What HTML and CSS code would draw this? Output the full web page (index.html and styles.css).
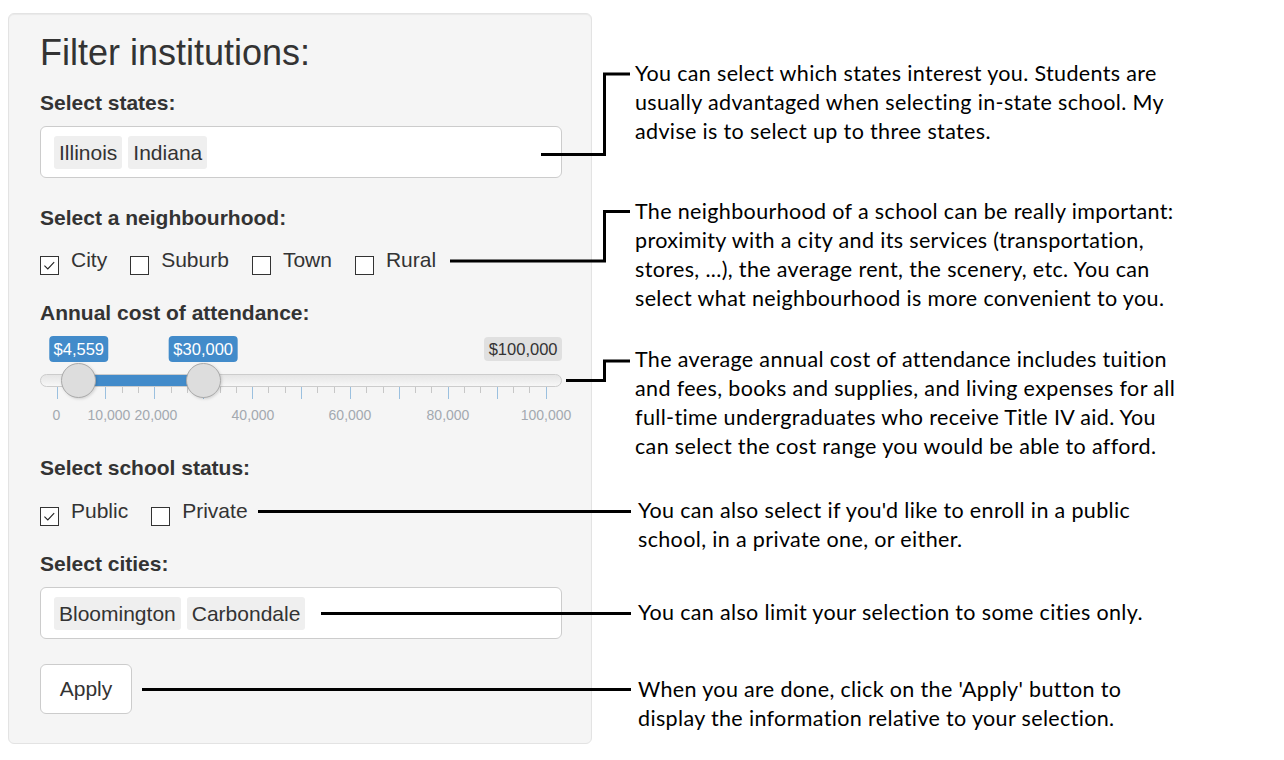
FILE: index.html
```html
<!DOCTYPE html>
<html lang="en">
<head>
<meta charset="utf-8">
<title>Filter institutions</title>
<link rel="stylesheet" href="styles.css">
</head>
<body>
<div class="page">
  <form class="well">
    <h3 class="title">Filter institutions:</h3>

    <div class="group g-states">
      <label class="ctl-label">Select states:</label>
      <div class="select-box"><span class="tag">Illinois</span><span class="tag">Indiana</span></div>
    </div>

    <div class="group g-hood">
      <label class="ctl-label">Select a neighbourhood:</label>
      <div class="checks">
        <label class="check"><span class="box"><svg viewBox="0 0 20 20" width="18" height="18"><polyline points="4,9.5 8,13.5 15.5,5.5" fill="none" stroke="#222" stroke-width="1.3"/></svg></span>City</label>
        <label class="check"><span class="box"></span>Suburb</label>
        <label class="check"><span class="box"></span>Town</label>
        <label class="check"><span class="box"></span>Rural</label>
      </div>
    </div>

    <div class="group g-cost">
      <label class="ctl-label">Annual cost of attendance:</label>
      <div class="slider">
        <span class="irs-max">$100,000</span>
        <span class="irs-single" style="left:38.8px">$4,559</span>
        <span class="irs-single" style="left:163.2px">$30,000</span>
        <span class="irs-line"></span>
        <span class="irs-bar" style="left:38.8px;width:124.4px"></span>
        <div class="grid">
          <span class="pol" style="left:16.5px"></span>
          <span class="pol small" style="left:32.8px"></span>
          <span class="pol small" style="left:49.1px"></span>
          <span class="pol" style="left:65.4px"></span>
          <span class="pol small" style="left:81.7px"></span>
          <span class="pol small" style="left:98px"></span>
          <span class="pol" style="left:114.3px"></span>
          <span class="pol small" style="left:130.6px"></span>
          <span class="pol small" style="left:146.9px"></span>
          <span class="pol" style="left:163.2px"></span>
          <span class="pol small" style="left:179.5px"></span>
          <span class="pol small" style="left:195.8px"></span>
          <span class="pol" style="left:212.1px"></span>
          <span class="pol small" style="left:228.4px"></span>
          <span class="pol small" style="left:244.7px"></span>
          <span class="pol" style="left:261px"></span>
          <span class="pol small" style="left:277.3px"></span>
          <span class="pol small" style="left:293.6px"></span>
          <span class="pol" style="left:309.9px"></span>
          <span class="pol small" style="left:326.2px"></span>
          <span class="pol small" style="left:342.5px"></span>
          <span class="pol" style="left:358.8px"></span>
          <span class="pol small" style="left:375.1px"></span>
          <span class="pol small" style="left:391.4px"></span>
          <span class="pol" style="left:407.7px"></span>
          <span class="pol small" style="left:424px"></span>
          <span class="pol small" style="left:440.3px"></span>
          <span class="pol" style="left:456.6px"></span>
          <span class="pol small" style="left:472.9px"></span>
          <span class="pol small" style="left:489.2px"></span>
          <span class="pol" style="left:505.5px"></span>
          <span class="gtext" style="left:16.5px">0</span>
          <span class="gtext" style="left:69px">10,000</span>
          <span class="gtext" style="left:116px">20,000</span>
          <span class="gtext" style="left:213px">40,000</span>
          <span class="gtext" style="left:310px">60,000</span>
          <span class="gtext" style="left:408px">80,000</span>
          <span class="gtext" style="left:506px">100,000</span>
        </div>
        <span class="irs-handle" style="left:38.8px"></span>
        <span class="irs-handle" style="left:163.2px"></span>
      </div>
    </div>

    <div class="group g-status">
      <label class="ctl-label">Select school status:</label>
      <div class="checks">
        <label class="check"><span class="box"><svg viewBox="0 0 20 20" width="18" height="18"><polyline points="4,9.5 8,13.5 15.5,5.5" fill="none" stroke="#222" stroke-width="1.3"/></svg></span>Public</label>
        <label class="check"><span class="box"></span>Private</label>
      </div>
    </div>

    <div class="group g-cities">
      <label class="ctl-label">Select cities:</label>
      <div class="select-box"><span class="tag">Bloomington</span><span class="tag">Carbondale</span></div>
    </div>

    <button type="button" class="btn">Apply</button>
  </form>

  <div class="notes">
    <p class="note n1">You can select which states interest you. Students are<br>usually advantaged when selecting in-state school. My<br>advise is to select up to three states.</p>
    <p class="note n2">The neighbourhood of a school can be really important:<br>proximity with a city and its services (transportation,<br>stores, ...), the average rent, the scenery, etc. You can<br>select what neighbourhood is more convenient to you.</p>
    <p class="note n3">The average annual cost of attendance includes tuition<br>and fees, books and supplies, and living expenses for all<br>full-time undergraduates who receive Title IV aid. You<br>can select the cost range you would be able to afford.</p>
    <p class="note n4">You can also select if you'd like to enroll in a public<br>school, in a private one, or either.</p>
    <p class="note n5">You can also limit your selection to some cities only.</p>
    <p class="note n6">When you are done, click on the 'Apply' button to<br>display the information relative to your selection.</p>
  </div>

  <svg class="connectors" width="1284" height="760" viewBox="0 0 1284 760">
    <g fill="none" stroke="#000" stroke-width="3">
      <polyline points="541,154.5 604.5,154.5 604.5,74 630,74"/>
      <polyline points="450,261 604.5,261 604.5,211.5 630,211.5"/>
      <polyline points="566,380.5 604.5,380.5 604.5,361 630,361"/>
      <line x1="258" y1="511.5" x2="631" y2="511.5"/>
      <line x1="321" y1="613.5" x2="631" y2="613.5"/>
      <line x1="142" y1="689.5" x2="631" y2="689.5"/>
    </g>
  </svg>
</div>
</body>
</html>
```

FILE: styles.css
```css
* { box-sizing: border-box; }

html, body {
  margin: 0;
  padding: 0;
  background: #ffffff;
}

body {
  font-family: "Liberation Sans", Arial, Helvetica, sans-serif;
  color: #333333;
  font-size: 21px;
}

.page {
  position: relative;
  width: 1284px;
  height: 760px;
  display: flex;
  align-items: flex-start;
  padding: 13px 0 0 8px;
}

/* ---------- panel ---------- */
.well {
  width: 584px;
  height: 731px;
  flex: none;
  margin: 0;
  padding: 19px 29px 0 31px;
  background: #f5f5f5;
  border: 1px solid #e3e3e3;
  border-radius: 6px;
  box-shadow: inset 0 1px 1px rgba(0,0,0,0.05);
  display: flex;
  flex-direction: column;
  align-items: flex-start;
}

.title {
  margin: 0 0 15px;
  font-size: 36px;
  font-weight: 400;
  line-height: 40px;
  color: #333;
}

.group {
  width: 100%;
  display: flex;
  flex-direction: column;
}

.ctl-label {
  display: block;
  font-weight: 700;
  font-size: 21px;
  line-height: 30px;
  height: 30px;
}

.g-states { margin-bottom: 25px; }
.g-states .ctl-label,
.g-cities .ctl-label { margin-bottom: 8px; }
.g-hood { margin-bottom: 23px; }
.g-cost { margin-bottom: 23px; }
.g-status { margin-bottom: 23px; }
.g-cities { margin-bottom: 25px; }

.select-box {
  width: 100%;
  height: 52px;
  background: #ffffff;
  border: 1px solid #cccccc;
  border-radius: 6px;
  padding: 0 13px;
  display: flex;
  align-items: center;
  gap: 6px;
}

.tag {
  background: #efefef;
  border-radius: 3px;
  height: 33px;
  line-height: 33px;
  padding: 0 5px;
  font-size: 21px;
  color: #333;
}

/* ---------- checkboxes ---------- */
.checks {
  display: flex;
  align-items: flex-start;
  height: 30px;
}
.g-hood .checks { margin-top: 12px; }
.g-status .checks { margin-top: 13px; }

.check {
  display: flex;
  align-items: flex-start;
  line-height: 30px;
  font-size: 21px;
  font-weight: 400;
  margin-right: 23px;
}

.box {
  width: 19px;
  height: 19px;
  flex: none;
  margin-top: 11px;
  margin-right: 12px;
  border: 1px solid #333;
  background: #fff;
  display: flex;
  align-items: center;
  justify-content: center;
}
.box svg { display: block; }

/* ---------- slider ---------- */
.g-cost .ctl-label { margin-bottom: 7px; }

.slider {
  position: relative;
  width: 100%;
  height: 95px;
}

.irs-max,
.irs-single {
  position: absolute;
  top: 1px;
  height: 26px;
  line-height: 26px;
  font-size: 16.5px;
  padding: 0 4.5px;
  border-radius: 4px;
}

.irs-max {
  right: 0;
  background: #e0e0e0;
  color: #333;
  height: 24px;
  line-height: 24px;
  top: 2px;
}

.irs-single {
  background: #428bca;
  color: #fff;
  transform: translateX(-50%);
}

.irs-line {
  position: absolute;
  left: 0;
  right: 0;
  top: 39px;
  height: 13px;
  border: 1px solid #cccccc;
  border-radius: 8px;
  background: linear-gradient(to bottom, #dddddd -50%, #ffffff 150%);
}

.irs-bar {
  position: absolute;
  top: 40px;
  height: 11px;
  background: #428bca;
}

.irs-handle {
  position: absolute;
  top: 28px;
  width: 35px;
  height: 35px;
  margin-left: -17.5px;
  border-radius: 50%;
  border: 1px solid #aaaaaa;
  background: #dddddd;
  box-shadow: 1px 1px 3px rgba(0,0,0,0.15);
}

.grid {
  position: absolute;
  left: 0;
  right: 0;
  top: 52px;
  height: 40px;
}

.pol {
  position: absolute;
  top: 0;
  width: 1px;
  height: 12px;
  background: #428bca;
  opacity: 0.5;
}
.pol.small {
  height: 6px;
  background: #999;
}

.gtext {
  position: absolute;
  top: 19px;
  transform: translateX(-50%);
  font-size: 14px;
  line-height: 18px;
  color: #a3a9b0;
  white-space: nowrap;
}

/* ---------- button ---------- */
.btn {
  width: 92px;
  height: 50px;
  padding: 0;
  font-family: "Liberation Sans", Arial, Helvetica, sans-serif;
  font-size: 21px;
  color: #333;
  background: #ffffff;
  border: 1px solid #cccccc;
  border-radius: 6px;
}

/* ---------- notes ---------- */
.notes {
  display: flex;
  flex-direction: column;
  margin-left: 43px;
}

.note {
  margin: 0;
  font-family: Lato, "Open Sans", sans-serif;
  font-size: 21.5px;
  letter-spacing: 0.35px;
  line-height: 29px;
  color: #000;
  white-space: nowrap;
}

.n1 { margin-top: 45.5px; }
.n2 { margin-top: 51px; }
.n3 { margin-top: 32px; }
.n4 { margin-top: 35px; margin-left: 3px; }
.n5 { margin-top: 44px; margin-left: 3px; }
.n6 { margin-top: 48px; margin-left: 3px; }

/* ---------- connector lines ---------- */
.connectors {
  position: absolute;
  left: 0;
  top: 0;
  pointer-events: none;
}
```
